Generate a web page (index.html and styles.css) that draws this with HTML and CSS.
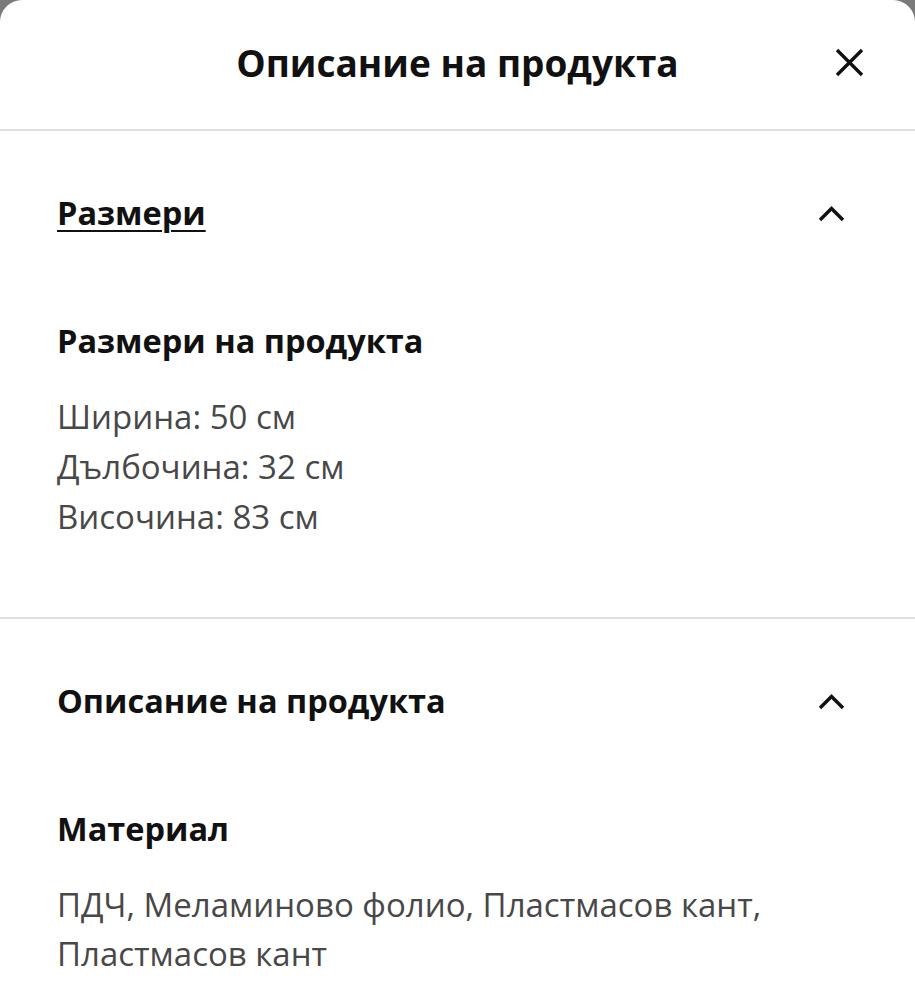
FILE: index.html
```html
<!DOCTYPE html>
<html>
  <head>
    <meta charset="utf-8">
    <title>Описание на продукта</title>
    <link rel="stylesheet" href="styles.css">
  </head>
  <body>
    <div class="sheet">
      <div class="sheet-header">
        <span></span>
        <h1 class="sheet-title">Описание на продукта</h1>
        <button class="close-btn" aria-label="Затвори">
          <svg width="29" height="29" viewBox="0 0 29 29">
            <path d="M2 2 L27 27 M27 2 L2 27" stroke="#111" stroke-width="3.4" fill="none"/>
          </svg>
        </button>
      </div>

      <section class="accordion">
        <div class="accordion-head">
          <h2 class="accordion-title underlined">Размери</h2>
          <svg class="chevron" width="27" height="17" viewBox="0 0 27 17">
            <path d="M2 15 L13.5 3.5 L25 15" stroke="#111" stroke-width="3.4" fill="none"/>
          </svg>
        </div>
        <h3 class="sub-title">Размери на продукта</h3>
        <div class="body-text">
          Ширина: 50 см<br>
          Дълбочина: 32 см<br>
          Височина: 83 см
        </div>
      </section>

      <section class="accordion">
        <div class="accordion-head">
          <h2 class="accordion-title">Описание на продукта</h2>
          <svg class="chevron" width="27" height="17" viewBox="0 0 27 17">
            <path d="M2 15 L13.5 3.5 L25 15" stroke="#111" stroke-width="3.4" fill="none"/>
          </svg>
        </div>
        <h3 class="sub-title">Материал</h3>
        <div class="body-text tight">
          ПДЧ, Меламиново фолио, Пластмасов кант,<br>
          Пластмасов кант
        </div>
      </section>
    </div>
  </body>
</html>
```

FILE: styles.css
```css
html, body {
  margin: 0px;
  height: 100%;
}
body {
  background-color: #7a7a7a;
  font-family: "Open Sans", "Noto Sans", sans-serif;
  color: #111111;
  overflow: hidden;
}
.sheet {
  background-color: #ffffff;
  border-radius: 22px 22px 0 0;
  min-height: 100%;
}
.sheet-header {
  height: 129px;
  display: grid;
  grid-template-columns: 1fr auto 1fr;
  align-items: center;
  border-bottom: 2px solid #e0e0e0;
}
.sheet-title {
  margin: 0px 0px 4px 0px;
  font-size: 37px;
  font-weight: 700;
  line-height: 50px;
}
.close-btn {
  justify-self: end;
  margin: 0px 51px 4px 0px;
  padding: 0px;
  border: none;
  background: none;
  display: flex;
}
.accordion {
  padding: 57px 70px 75px 57px;
  border-bottom: 2px solid #e0e0e0;
}
.accordion:last-child {
  border-bottom: none;
}
.accordion-head {
  display: flex;
  justify-content: space-between;
  align-items: center;
  height: 50px;
}
.accordion-title {
  margin: 0px;
  font-size: 32.5px;
  font-weight: 700;
  line-height: 50px;
}
.underlined {
  text-decoration: underline;
  text-decoration-thickness: 2px;
  text-underline-offset: 5px;
}
.sub-title {
  margin: 78px 0px 26px 0px;
  font-size: 32.5px;
  font-weight: 700;
  line-height: 50px;
}
.body-text {
  font-size: 33px;
  line-height: 50px;
  color: #484848;
}
.body-text.tight {
  line-height: 49px;
}
```
